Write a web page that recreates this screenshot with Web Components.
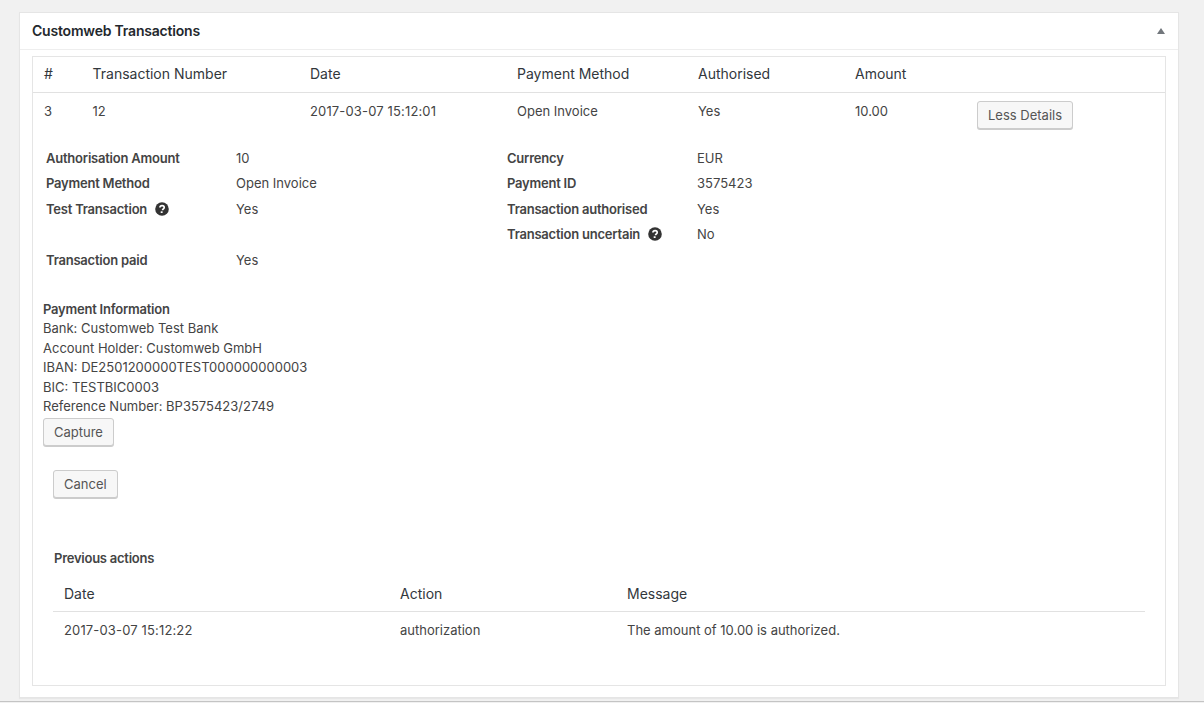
<!DOCTYPE html>
<html>
<head>
<meta charset="utf-8">
<title>Customweb Transactions</title>
<style>
  html, body { margin: 0; height: 703px; overflow: hidden; }
  body {
    background: #f1f1f1;
    color: #444;
    font: 13px/19.5px Inter, Roboto, "Liberation Sans", sans-serif;
    box-sizing: border-box;
    padding: 12px 25px 0 19px;
    position: relative;
  }
</style>
</head>
<body>
<wp-postbox heading="Customweb Transactions">
  <transaction-panel></transaction-panel>
</wp-postbox>
<screen-edge></screen-edge>
<script>
class WpButton extends HTMLElement {
  constructor() {
    super();
    this.attachShadow({ mode: "open" });
    this.shadowRoot.innerHTML = `
      <style>
        :host { display: inline-block; }
        button {
          display: block;
          height: 28px;
          box-sizing: border-box;
          padding: 0 10px;
          font: 13px/26px Inter, Roboto, "Liberation Sans", sans-serif;
          color: #555;
          background: #f7f7f7;
          border: 1px solid #ccc;
          border-radius: 3px;
          box-shadow: 0 1px 0 #ccc;
          cursor: pointer;
        }
      </style>
      <button><slot></slot></button>
    `;
  }
}

class HelpIcon extends HTMLElement {
  constructor() {
    super();
    this.attachShadow({ mode: "open" });
    this.shadowRoot.innerHTML = `
      <style>
        :host { display: inline-block; width: 14px; height: 14px; margin-left: 5px; vertical-align: -2px; }
        svg { display: block; }
      </style>
      <svg width="14" height="14" viewBox="0 0 14 14">
        <circle cx="7" cy="7" r="6.8" fill="#333"/>
        <path d="M4.9 5.5c.1-1.2 1-1.9 2.2-1.9 1.2 0 2.1.7 2.1 1.8 0 .8-.4 1.2-1 1.6-.5.3-.6.5-.6 1v.2" fill="none" stroke="#fff" stroke-width="1.7"/>
        <rect x="5.7" y="9.3" width="1.9" height="1.7" fill="#fff"/>
      </svg>
    `;
  }
}

class WpPostbox extends HTMLElement {
  constructor() {
    super();
    this.attachShadow({ mode: "open" });
    this.shadowRoot.innerHTML = `
      <style>
        :host {
          display: block;
          height: 686px;
          box-sizing: border-box;
          background: #fff;
          border: 1px solid #e5e5e5;
          box-shadow: 0 1px 1px rgba(0, 0, 0, 0.04);
        }
        .head {
          display: flex;
          align-items: center;
          justify-content: space-between;
          height: 36px;
          padding: 0 12px;
          border-bottom: 1px solid #eee;
        }
        h2 {
          margin: 0;
          font: 600 14px/20px Inter, Roboto, "Liberation Sans", sans-serif;
          letter-spacing: -0.2px;
          color: #23282d;
        }
        .toggle {
          width: 0;
          height: 0;
          margin-right: 1px;
          border-left: 4px solid transparent;
          border-right: 4px solid transparent;
          border-bottom: 6px solid #72777c;
        }
        .body { padding: 6px 12px 0; }
      </style>
      <div class="head"><h2></h2><span class="toggle"></span></div>
      <div class="body"><slot></slot></div>
    `;
  }

  connectedCallback() {
    this.shadowRoot.querySelector("h2").textContent = this.getAttribute("heading");
  }
}

class TransactionPanel extends HTMLElement {
  constructor() {
    super();
    this.attachShadow({ mode: "open" });
    this.shadowRoot.innerHTML = `
      <style>
        :host {
          display: block;
          height: 630px;
          box-sizing: border-box;
          border: 1px solid #e5e5e5;
          color: #444;
        }
        .row {
          display: grid;
          grid-template-columns: 48.5px 217.5px 207px 181px 157px 122px 1fr;
          padding-left: 11px;
        }
        .titles {
          height: 35px;
          align-items: center;
          border-bottom: 1px solid #e1e1e1;
          font-size: 14px;
          color: #32373c;
        }
        .row.titles { padding-bottom: 1px; height: 34px; }
        .summary { padding-top: 8px; height: 32px; }
        .summary span { padding-top: 1px; }
        .when { letter-spacing: 0.15px; }
        .facts {
          display: grid;
          grid-template-columns: 190px 271px 190px 1fr;
          grid-auto-rows: 25.5px;
          align-items: center;
          margin: 12.7px 0 0 13px;
        }
        b { font-weight: 600; letter-spacing: -0.22px; }
        .info { margin: 26.6px 0 0 10px; }
        .info b { display: block; }
        .info wp-button { display: block; width: max-content; margin-top: 1.7px; }
        .cancel { margin: 24px 0 0 20px; display: block; width: max-content; }
        h3 {
          margin: 51px 0 0 21px;
          font: 600 13px/19.5px Inter, Roboto, "Liberation Sans", sans-serif;
          letter-spacing: -0.25px;
          color: #444;
        }
        .log { margin: 8px 20px 0; }
        .log .line {
          display: grid;
          grid-template-columns: 336px 227px 1fr;
          padding-left: 11px;
        }
        .log .titles { height: 34px; font-size: 14px; }
        .log .entry { padding-top: 9px; }
      </style>
      <div class="row titles">
        <span>#</span><span>Transaction Number</span><span>Date</span>
        <span>Payment Method</span><span>Authorised</span><span>Amount</span><span></span>
      </div>
      <div class="row summary">
        <span>3</span><span>12</span><span class="when">2017-03-07 15:12:01</span>
        <span>Open Invoice</span><span>Yes</span><span>10.00</span>
        <wp-button>Less Details</wp-button>
      </div>
      <div class="facts">
        <b>Authorisation Amount</b><span>10</span><b>Currency</b><span>EUR</span>
        <b>Payment Method</b><span>Open Invoice</span><b>Payment ID</b><span>3575423</span>
        <b>Test Transaction <help-icon></help-icon></b><span>Yes</span><b>Transaction authorised</b><span>Yes</span>
        <span></span><span></span><b>Transaction uncertain <help-icon></help-icon></b><span>No</span>
        <b>Transaction paid</b><span>Yes</span><span></span><span></span>
      </div>
      <div class="info">
        <b>Payment Information</b>
        <div>Bank: Customweb Test Bank</div>
        <div>Account Holder: Customweb GmbH</div>
        <div>IBAN: DE2501200000TEST000000000003</div>
        <div>BIC: TESTBIC0003</div>
        <div>Reference Number: BP3575423/2749</div>
        <wp-button>Capture</wp-button>
      </div>
      <wp-button class="cancel">Cancel</wp-button>
      <h3>Previous actions</h3>
      <div class="log">
        <div class="line titles"><span>Date</span><span>Action</span><span>Message</span></div>
        <div class="line entry"><span class="when">2017-03-07 15:12:22</span><span>authorization</span><span>The amount of 10.00 is authorized.</span></div>
      </div>
    `;
  }
}

class ScreenEdge extends HTMLElement {
  constructor() {
    super();
    this.attachShadow({ mode: "open" });
    this.shadowRoot.innerHTML = `
      <style>
        :host { display: block; position: absolute; left: 0; right: 0; top: 701px; height: 2px; }
        div { height: 1px; background: #c4c4c4; }
      </style>
      <div></div>
    `;
  }
}

customElements.define("wp-button", WpButton);
customElements.define("help-icon", HelpIcon);
customElements.define("wp-postbox", WpPostbox);
customElements.define("transaction-panel", TransactionPanel);
customElements.define("screen-edge", ScreenEdge);
</script>
</body>
</html>
